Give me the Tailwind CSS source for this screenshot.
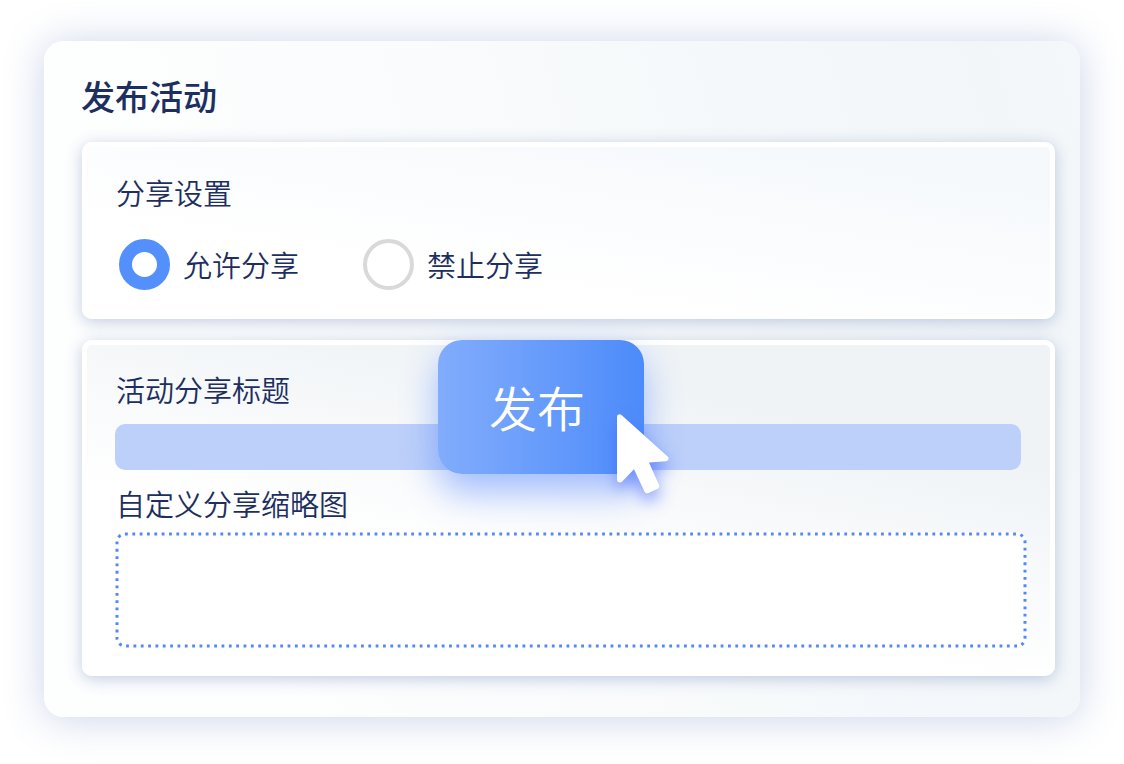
<!DOCTYPE html>
<html lang="zh-CN">
<head>
<meta charset="utf-8">
<meta name="viewport" content="width=device-width, initial-scale=1">
<title>发布活动</title>
<script src="https://cdn.jsdelivr.net/npm/@tailwindcss/browser@4"></script>
</head>
<body class="bg-white px-11 pt-[41px] pb-[47px] font-['Noto_Sans_CJK_SC',sans-serif] font-[350] text-[#1c2f60]">
<main class="rounded-[20px] bg-[linear-gradient(75deg,#fdfefe_20%,#f2f6f9_92%,#f5f8fa)] pt-[29px] pr-[25px] pb-[41px] pl-[37px] shadow-[0_2px_40px_rgba(70,100,180,0.28)]">
  <h1 class="text-[34px] leading-[51px] font-medium">发布活动</h1>
  <form class="mt-[21px] ml-px flex flex-col gap-[21px]">
    <fieldset class="rounded-[10px] border-5 border-white bg-[linear-gradient(9deg,#ffffff_30%,#f6f9fc_85%)] px-[28px] pb-6 shadow-[0_3px_16px_rgba(60,90,160,0.3)]">
      <legend class="float-left mt-[23px] w-full pl-px text-[29px] leading-11">分享设置</legend>
      <div class="clear-both flex gap-16 pt-[25px] pl-1 text-[29px] leading-[51px]">
        <label class="flex items-center gap-[13px]">
          <input type="radio" name="share" value="allow" checked class="size-[51px] appearance-none rounded-full border-4 border-[#d9d9d9] bg-white checked:border-[13px] checked:border-[#5490fb]">
          允许分享
        </label>
        <label class="flex items-center gap-[13px]">
          <input type="radio" name="share" value="deny" class="size-[51px] appearance-none rounded-full border-4 border-[#d9d9d9] bg-white checked:border-[13px] checked:border-[#5490fb]">
          禁止分享
        </label>
      </div>
    </fieldset>
    <section class="relative flex flex-col rounded-[10px] border-5 border-white bg-[linear-gradient(12deg,#ffffff_35%,#eff3f6_78%)] pt-[22px] pr-[23px] pb-[23px] pl-[28px] shadow-[0_3px_16px_rgba(60,90,160,0.3)]">
      <label for="share-title" class="pl-px text-[29px] leading-11">活动分享标题</label>
      <input id="share-title" type="text" class="mt-[13px] mr-1.5 h-[46px] rounded-[10px] bg-[#bdd0f9] px-4 text-2xl">
      <label for="thumb" class="mt-[11px] pl-px text-[29px] leading-11">自定义分享缩略图</label>
      <button id="thumb" type="button" class="mt-[7px] h-[116px] rounded-[10px] bg-white p-[2px]">
        <svg class="size-full overflow-visible" fill="none" stroke="#5388fa" stroke-width="3" aria-hidden="true">
          <rect width="100%" height="100%" rx="8" stroke-dasharray="2.800 4.540"/>
        </svg>
      </button>
      <button type="submit" class="absolute -top-[5px] left-[351px] h-[134px] w-[206px] rounded-3xl bg-linear-to-r from-[#82acfc] to-[#4c8bfa] pr-2 pb-0.5 text-5xl text-white shadow-[0_18px_36px_rgba(50,110,255,0.44)]">发布</button>
      <svg class="absolute top-[69px] left-[530px] h-20 w-[52px] overflow-visible drop-shadow-[0_8px_8px_rgba(60,100,255,0.6)]" viewBox="0 0 52 80" fill="#fff" aria-hidden="true">
        <path d="M0 3C0 .4 2.600-.6 4.500 1L50.600 42.400C52.500 44.200 51.400 47 49 47.200L32 48.600L42 71C42.600 72.600 42 74 40.600 74.700L31.500 79C30 79.700 28.300 79.200 27.600 77.800L17 55.200L5.200 67.600C3.300 69.500 0 68.400 0 65.600Z"/>
      </svg>
    </section>
  </form>
</main>
</body>
</html>
